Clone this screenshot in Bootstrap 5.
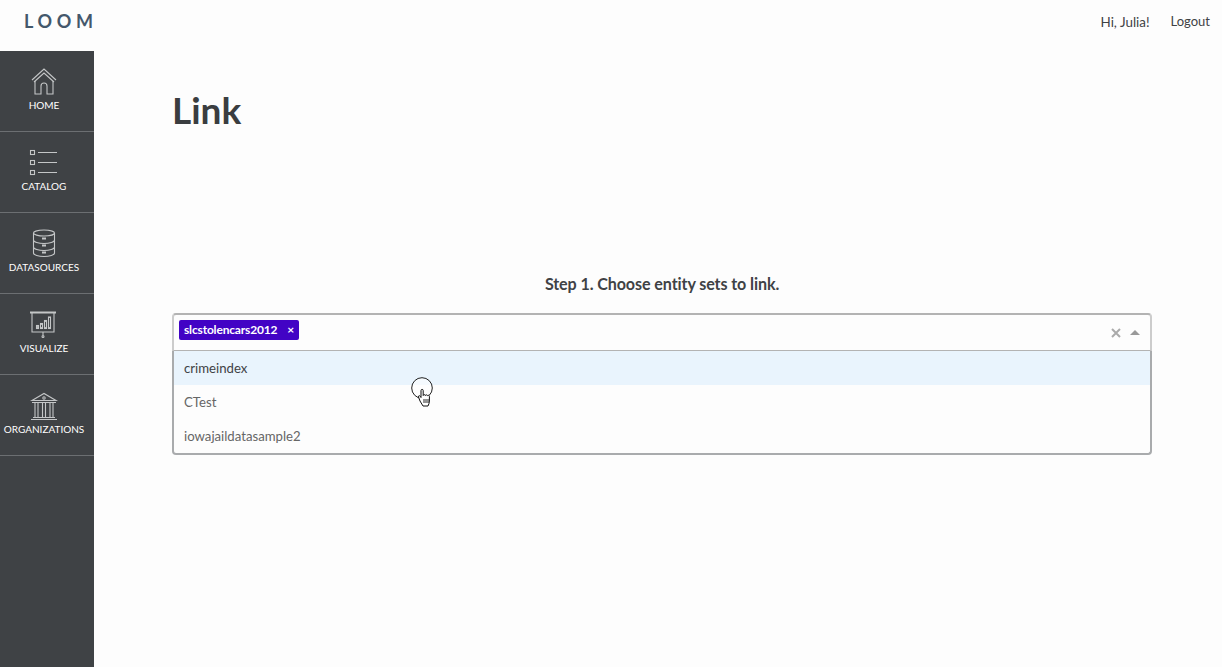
<!DOCTYPE html>
<html lang="en">
<head>
<meta charset="utf-8">
<title>Loom</title>
<link rel="stylesheet" href="https://cdn.jsdelivr.net/npm/bootstrap@5.3.0/dist/css/bootstrap.min.css">
<style>
html,body{height:100%}
body{font-family:Lato,"Liberation Sans",sans-serif;background:#fdfdfd;color:#3f4245;overflow:hidden}
.topbar{height:51px;padding:0 12px 0 24px}
.brand{font-size:18px;font-weight:700;letter-spacing:4.7px;color:#44586b;margin-top:-9px}
.toplinks{gap:21px}
.toplink{font-size:13px;color:#3f4245;text-decoration:none;margin-top:-7px}
.greet{font-size:13.400px}
.shell{height:616px}
.side{width:94px;background:#3f4245;flex:none}
.sideitem{height:81px;border-bottom:1px solid #6c6f72;color:#fff;font-size:10px;text-decoration:none;padding:16px 6px 0 0;line-height:12px}
.sideitem svg{display:block;height:31px;width:40px;margin-bottom:1px;fill:none;stroke:#c4c6c7;stroke-width:1.1}
.pagemain{padding:0 70px 0 78px;min-width:0}
.pagetitle{font-size:37px;font-weight:700;line-height:44px;margin:37px 0 0 0;color:#3a3d40}
.steplabel{font-size:16.100px;font-weight:700;line-height:20px;margin:142px 0 19px 0;color:#3f4245;letter-spacing:-.1px}
.pickwrap{position:relative}
.pickbox{height:39px;border:2px solid #b3b3b3;border-right-color:#ccc;border-left-color:#ccc;border-radius:4px 4px 0 0;background:#fdfdfd;padding:0 10px 0 5px}
.chip{background:#4203c5;color:#fff;font-size:12px;font-weight:700;line-height:20px;height:20px;border-radius:2px;padding:0 5px;margin-top:-6px;letter-spacing:-.17px}
.chipx{margin-left:10px;font-size:12px}
.clearx{width:10px;height:10px;stroke:#aaa;stroke-width:2;margin-right:9px}
.caretup{width:0;height:0;border-left:5px solid transparent;border-right:5px solid transparent;border-bottom:5px solid #999}
.pickmenu{border:2px solid #a9abad;border-top:0;border-radius:0 0 4px 4px;background:#fdfdfd;margin-top:-1px}
.pickopt{height:34px;line-height:34px;padding-left:10px;font-size:13.200px;color:#666}
.pickopt.active-opt{background:#e9f4fd;color:#3f4245}
.hand{position:absolute;left:239px;top:63px;width:24px;height:32px}
</style>
</head>
<body>
<header class="topbar d-flex align-items-center justify-content-between">
  <div class="brand">LOOM</div>
  <div class="d-flex toplinks">
    <a class="toplink greet" href="#">Hi, Julia!</a>
    <a class="toplink" href="#">Logout</a>
  </div>
</header>
<div class="shell d-flex">
  <nav class="side d-flex flex-column">
    <a class="sideitem d-flex flex-column align-items-center" href="#">
      <svg viewBox="0 0 40 31"><path d="M8 13 20 2l12 11M10 15 20 6l10 9"/><path d="M11 14v13h6v-8a3 3 0 0 1 6 0v8h6V14"/></svg>
      HOME
    </a>
    <a class="sideitem d-flex flex-column align-items-center" href="#">
      <svg viewBox="0 0 40 31"><rect x="6.500" y="2.500" width="4" height="4"/><rect x="6.500" y="12.500" width="4" height="4"/><rect x="6.500" y="22.500" width="4" height="4"/><path d="M14 4.500h19M14 14.500h19M14 24.500h19"/></svg>
      CATALOG
    </a>
    <a class="sideitem d-flex flex-column align-items-center" href="#">
      <svg viewBox="0 0 40 31"><ellipse cx="20" cy="4" rx="10.500" ry="3"/><path d="M9.500 4v20c0 2 5 3.500 10.500 3.500S30.500 26 30.500 24V4M9.500 11c0 2 5 3.500 10.500 3.500s10.500-1.500 10.500-3.500M9.500 18c0 2 5 3.500 10.500 3.500s10.500-1.500 10.500-3.500"/><path d="M18 9.500h4M18 16.500h4M18 23.500h4" stroke-width="2"/></svg>
      DATASOURCES
    </a>
    <a class="sideitem d-flex flex-column align-items-center" href="#">
      <svg viewBox="0 0 40 31"><path d="M6 2.500h26" stroke-width="2"/><path d="M8 3v19h22V3"/><path d="M19 22v3"/><circle cx="19" cy="26.500" r="1"/><rect x="12.500" y="15.500" width="2" height="3"/><rect x="16.500" y="13.500" width="2" height="5"/><rect x="20.500" y="10.500" width="2" height="8"/><rect x="24.500" y="7" width="2" height="11.500"/></svg>
      VISUALIZE
    </a>
    <a class="sideitem d-flex flex-column align-items-center" href="#">
      <svg viewBox="0 0 40 31"><path d="M8 9.500 20 2.500l12 7zM8 11.500h24"/><circle cx="20" cy="7" r="1.200"/><path d="M11 12v14M14 12v14M18.500 12v14M21.500 12v14M26 12v14M29 12v14M9 26.500h22M7 28.500h26"/></svg>
      ORGANIZATIONS
    </a>
  </nav>
  <main class="pagemain flex-grow-1">
    <h1 class="pagetitle">Link</h1>
    <div class="steplabel text-center">Step 1. Choose entity sets to link.</div>
    <div class="pickwrap">
      <div class="pickbox d-flex align-items-center justify-content-between">
        <span class="chip d-inline-flex align-items-center">slcstolencars2012<span class="chipx">×</span></span>
        <span class="d-flex align-items-center">
          <svg class="clearx" viewBox="0 0 10 10"><path d="M1 1l8 8M9 1l-8 8"/></svg>
          <span class="caretup"></span>
        </span>
      </div>
      <div class="pickmenu">
        <div class="pickopt active-opt">crimeindex</div>
        <div class="pickopt">CTest</div>
        <div class="pickopt">iowajaildatasample2</div>
      </div>
      <svg class="hand" viewBox="0 0 24 32">
        <circle cx="11" cy="12" r="10.300" fill="#fff" fill-opacity=".55" stroke="#222" stroke-width="1"/>
        <path d="M12 30 9 25 7.500 21c-.4-1.300 1-1.800 1.700-.8l.8 1.300V14.500c0-1.500 2.200-1.500 2.200 0V19.500c0-1.100 2.200-1.100 2.200 0 0-.9 2-.9 2.100.2.300-.7 1.900-.5 1.900.6v4.700c0 1.800-.6 3.200-1.400 5z" fill="#fff" stroke="#111" stroke-width="1"/>
        <path d="M13 23v4M15 23v4M17 23v4" stroke="#111" stroke-width=".9"/>
      </svg>
    </div>
  </main>
</div>
</body>
</html>
